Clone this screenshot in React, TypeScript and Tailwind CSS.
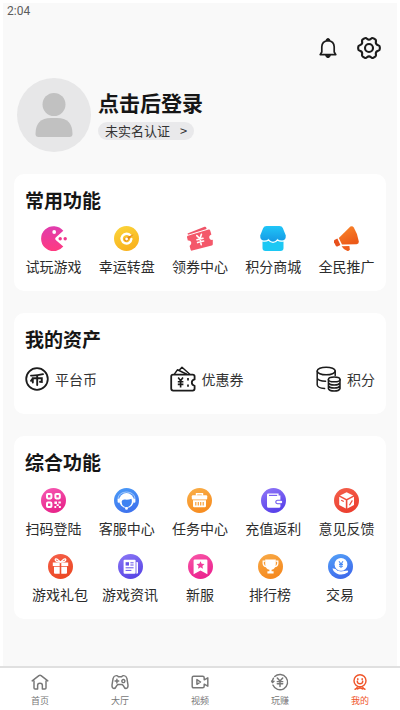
import { ReactNode, useState } from 'react';

type Item = {
  label: string;
  icon: ReactNode;
};

// round icon with a vertical gradient, used by the services card
function Disc({ id, from, to, children }: { id: string; from: string; to: string; children: ReactNode }) {
  return (
    <svg viewBox="0 0 25 25" className="h-[25px] w-[25px]" aria-hidden="true">
      <defs>
        <linearGradient id={id} x1="0" y1="0" x2="0.4" y2="1">
          <stop offset="0" stopColor={from} />
          <stop offset="1" stopColor={to} />
        </linearGradient>
      </defs>
      <circle cx="12.5" cy="12.5" r="12.5" fill={`url(#${id})`} />
      {children}
    </svg>
  );
}

const PacmanIcon = () => (
  <svg viewBox="0 0 26 25" className="h-[25px] w-[26px]" aria-hidden="true">
    <defs>
      <linearGradient id="pac" x1="0" y1="0" x2="0" y2="1">
        <stop offset="0" stopColor="#e03cae" />
        <stop offset="1" stopColor="#ff3a80" />
      </linearGradient>
    </defs>
    <path d="M22.3 4.8A12.5 12.5 0 1 0 22.3 20.6L15 14.2Q13.4 12.7 15 11.3Z" fill="url(#pac)" />
    <circle cx="13.2" cy="6" r="1.9" fill="#fff" />
    <circle cx="19.2" cy="12.8" r="1.7" fill="#f0388e" />
    <circle cx="24.2" cy="12.8" r="1.7" fill="#f0388e" />
  </svg>
);

const WheelIcon = () => (
  <Disc id="wheel" from="#fbd63c" to="#f9b31d">
    <path d="M16.4 9.6A4.9 4.9 0 1 0 17.4 13" fill="none" stroke="#fff" strokeWidth="2.4" strokeLinecap="round" />
    <path d="M19.8 8.2L14.2 13.8A2 2 0 1 1 11.8 11.6Z" fill="#e58a1c" />
    <circle cx="12.6" cy="13" r="1.4" fill="#fff" />
  </Disc>
);

const TicketIcon = () => (
  <svg viewBox="0 0 27 25" className="h-[25px] w-[27px]" aria-hidden="true">
    <path d="M1.5 7.6L18.5 0.8Q19.8 0.4 20.3 1.8L20.6 3L2 8.8Z" fill="#ef5468" />
    <path d="M1.8 9.8L22.6 3.6Q23.8 3.3 24.2 4.5L25.4 8.4Q22.6 9.6 23.4 12.2Q24.2 14.3 26.8 13.8L26.8 18Q26.9 19.2 25.8 19.6L6.2 24.6Q5 24.9 4.6 23.8L3.6 20Q5.8 18.8 5.2 16.3Q4.4 14 1.8 14.6L1 11.2Q0.9 10.1 1.8 9.8Z" fill="#f4586a" />
    <path d="M10.8 9.6L14 12.8L15.4 8.2M14 12.8L15.2 18.6M11 13.8L17 12.2M11.6 16.6L17.6 15" fill="none" stroke="#fff" strokeWidth="1.6" strokeLinecap="round" />
  </svg>
);

const ShopIcon = () => (
  <svg viewBox="0 0 26 25" className="h-[25px] w-[26px]" aria-hidden="true">
    <defs>
      <linearGradient id="shop" x1="0" y1="0" x2="0" y2="1">
        <stop offset="0" stopColor="#20c6f8" />
        <stop offset="1" stopColor="#1598e4" />
      </linearGradient>
    </defs>
    <path d="M2.5 13H23.5V22Q23.5 25 20.5 25H5.5Q2.5 25 2.5 22Z" fill="#1cc8f4" />
    <path d="M6.5 0H19.5Q22 0 22.8 2L25.8 9.4Q26 14.4 21.8 14.4Q19.3 14.4 17.5 12.8Q15.5 15.8 13 15.8Q10.5 15.8 8.5 12.8Q6.7 14.4 4.2 14.4Q0 14.4 0.2 9.4L3.2 2Q4 0 6.5 0Z" fill="url(#shop)" />
    <path d="M2 14.8Q6.5 15.8 8.5 13.8Q10.4 16.4 13 16.4Q15.6 16.4 17.5 13.8Q19.5 15.8 24 14.8" fill="none" stroke="#fff" strokeWidth="1.2" />
  </svg>
);

const HornIcon = () => (
  <svg viewBox="0 0 25 25" className="h-[25px] w-[25px]" aria-hidden="true">
    <defs>
      <linearGradient id="horn" x1="0" y1="0" x2="0.5" y2="1">
        <stop offset="0" stopColor="#fb8a2c" />
        <stop offset="1" stopColor="#ec5a18" />
      </linearGradient>
    </defs>
    <path d="M16.4 0.6Q18.4 -0.6 19.8 1.5Q23.6 7.6 24.8 15.4Q25 18 22.6 18.2L8 18.6L4.8 12Z" fill="url(#horn)" />
    <path d="M0.4 14L3.4 12.6L6.4 19L3.4 20.4Q2.2 20.8 1.6 19.6L0 16.2Q-0.4 14.6 0.4 14Z" fill="#e8501c" />
    <path d="M7.6 20.2L15.4 20L15.8 23.2Q15.4 25.6 13 24.8Q9.4 23.4 7.6 20.2Z" fill="#ee5d1c" />
  </svg>
);

const QrIcon = () => (
  <Disc id="qr" from="#f75ab4" to="#e8268b">
    <g fill="none" stroke="#fff" strokeWidth="2">
      <rect x="6" y="6" width="4.4" height="4.4" rx="0.8" />
      <rect x="14.4" y="6" width="4.4" height="4.4" rx="0.8" />
      <rect x="6" y="14.6" width="4.4" height="4.4" rx="0.8" />
    </g>
    <path d="M13.4 13.6H16V16H13.4ZM17.4 13.6H19.8V15.4H17.4ZM15.6 16.2H17.8V18H15.6ZM13.4 18H15.2V20H13.4ZM17.8 18H19.8V20H17.8Z" fill="#fff" />
  </Disc>
);

const ServiceIcon = () => (
  <Disc id="service" from="#4a9cf8" to="#3f74ee">
    <circle cx="12.5" cy="12.4" r="7.4" fill="#fff" />
    <path d="M7.6 13.8Q8 11.4 11 11.6Q14.5 12 17.5 10.8Q19 16 15 18.6Q12.5 20 10 18.6Q7.6 17 7.6 13.8Z" fill="#3f83f2" />
    <path d="M3.9 10.6Q5 4.2 12.5 4Q20 4.2 21.1 10.6" fill="none" stroke="#a9cdfb" strokeWidth="1" />
    <rect x="3.6" y="10.4" width="2.2" height="4.4" rx="1.1" fill="#fff" />
    <rect x="19.2" y="10.4" width="2.2" height="4.4" rx="1.1" fill="#fff" />
    <circle cx="12.5" cy="20.4" r="1.4" fill="#fff" />
  </Disc>
);

const TaskIcon = () => (
  <Disc id="task" from="#f9b04a" to="#f78e22">
    <path d="M9.5 7.5V5.8H15.5V7.5" fill="none" stroke="#fff" strokeWidth="1.4" />
    <rect x="4.8" y="7.2" width="15.4" height="4.2" rx="1" fill="#fff" />
    <path d="M6 12.2H19V18Q19 19.2 17.8 19.2H7.2Q6 19.2 6 18Z" fill="#fff" />
    <path d="M8.8 14V17.4M11.3 14V17.4M13.7 14V17.4M16.2 14V17.4" stroke="#f8a03a" strokeWidth="1.2" />
  </Disc>
);

const WalletIcon = () => (
  <Disc id="wallet" from="#9177f8" to="#5a43ea">
    <path d="M7.2 5.6H17.6V7.6H19.4V11.8H16.4Q14.2 12 14.2 14Q14.2 16 16.4 16.2H19.4V18.4Q19.4 19.8 18 19.8H7.6Q6 19.8 6 18.2V6.8Q6 5.6 7.2 5.6Z" fill="#fff" />
    <path d="M8 7.4H16.2" stroke="#7a62f2" strokeWidth="1.2" />
    <rect x="15.4" y="12.8" width="5.8" height="2.5" rx="1.2" fill="#fff" />
  </Disc>
);

const BoxIcon = () => (
  <Disc id="box" from="#f4604c" to="#ec4030">
    <path d="M12.6 4.2L19.2 7.6L12.6 11L6 7.6Z" fill="#fff" />
    <path d="M5.2 8.8L11.8 12.2V20.4L5.2 17Z" fill="#fff" />
    <path d="M20 8.8L13.4 12.2V20.4L20 17Z" fill="#fff" />
    <path d="M7.2 12.2L9.8 13.5" stroke="#ee4c3c" strokeWidth="1.2" />
    <path d="M15.4 17.2L18.4 12.4" stroke="#ee4c3c" strokeWidth="1.2" />
  </Disc>
);

const GiftIcon = () => (
  <Disc id="gift" from="#f6604a" to="#ec4a26">
    <path d="M12.5 8.2Q8 3.4 7.2 5.6Q7 7.8 12.5 8.2Q18 7.8 17.8 5.6Q17 3.4 12.5 8.2Z" fill="none" stroke="#fff" strokeWidth="1.3" />
    <path d="M4.8 8.4H11.7V12H4.8ZM13.3 8.4H20.2V12H13.3ZM6 12.8H11.7V19.8H7Q6 19.8 6 18.8ZM13.3 12.8H19V18.8Q19 19.8 18 19.8H13.3Z" fill="#fff" />
  </Disc>
);

const NewsIcon = () => (
  <Disc id="news" from="#8c78f6" to="#5b48e6">
    <rect x="5.6" y="5.8" width="12" height="14" rx="1" fill="#fff" />
    <path d="M18.4 8H19.2Q20 8 20 8.8V18.4Q20 19.8 18.4 19.8Z" fill="#fff" />
    <rect x="7.6" y="8.2" width="3.4" height="3.4" fill="#6753ea" />
    <path d="M12.4 8.8H15.6M12.4 11H15.6M7.6 13.8H15.6M7.6 16.4H13.4" stroke="#6753ea" strokeWidth="1" />
  </Disc>
);

const StarIcon = () => (
  <Disc id="star" from="#f957a8" to="#ec2590">
    <path d="M6.8 5.4H18.2Q19.4 5.4 19.4 6.6V20.2L12.5 16.4L5.6 20.2V6.6Q5.6 5.4 6.8 5.4Z" fill="#fff" />
    <path d="M12.5 7.2L13.7 9.8L16.5 10.1L14.4 12L15 14.7L12.5 13.3L10 14.7L10.6 12L8.5 10.1L11.3 9.8Z" fill="#f23c9a" />
  </Disc>
);

const TrophyIcon = () => (
  <Disc id="trophy" from="#f8ab48" to="#f58a20">
    <path d="M7.2 5.6H17.8V10Q17.6 15 13.6 15.8V17.2H15.6V19.6H9.4V17.2H11.4V15.8Q7.4 15 7.2 10Z" fill="#fff" />
    <path d="M7.2 7.2H5.2V9.6Q5.6 12.4 8.2 12.6M17.8 7.2H19.8V9.6Q19.4 12.4 16.8 12.6" fill="none" stroke="#fff" strokeWidth="1.3" />
  </Disc>
);

const TradeIcon = () => (
  <Disc id="trade" from="#54a2f8" to="#3f6cec">
    <circle cx="13" cy="10.4" r="6.4" fill="#fff" />
    <path d="M11 7.2L13 10L15 7.2M13 10V14M11 10.4H15M11 12.2H15" fill="none" stroke="#4c8cf4" strokeWidth="1.1" />
    <path d="M4.4 14.6Q7.4 14 9.4 16.8L13 17.6L19.6 16.4Q20.8 17.2 19.6 18.6Q16 21.2 11 20.4Q6 19.4 4.4 14.6Z" fill="#fff" />
  </Disc>
);

const CoinIcon = () => (
  <svg viewBox="0 0 24 24" className="h-6 w-6" fill="none" stroke="#1c1c1c" strokeWidth="1.8" aria-hidden="true">
    <circle cx="12" cy="12" r="10.8" />
    <path d="M6 8.6Q12 8.8 18 7.2M12.2 8.4V18M7.8 15.6V11.2H16.8V15L15 14.8M6 13.8L8 11.2" strokeWidth="1.9" strokeLinecap="round" />
  </svg>
);

const CouponIcon = () => (
  <svg viewBox="0 0 26 26" className="h-[26px] w-[26px]" fill="none" stroke="#1c1c1c" strokeWidth="1.8" strokeLinejoin="round" aria-hidden="true">
    <path d="M3 8.6H22.6Q24.6 8.6 24.6 10.4V13.4Q21.8 14 21.8 16.6Q21.8 19.2 24.6 19.8V22.6Q24.6 24.6 22.6 24.6H3.2Q1.2 24.6 1.2 22.6V10.4Q1.2 8.6 3 8.6Z" />
    <path d="M4.4 8.2L7.4 3.8L16.8 8.2M9.2 4.2L12 1.2L19.8 8.2" strokeWidth="1.5" />
    <path d="M8.2 11.6L10.6 14.8L13 11.6M10.6 14.8V21.4M7.8 15.8H13.4M7.8 18.4H13.4" strokeWidth="1.6" />
    <path d="M18 12V14.4M18 18.4V20.8" strokeWidth="1.7" />
  </svg>
);

const PointsIcon = () => (
  <svg viewBox="0 0 25 26" className="h-[26px] w-[25px]" fill="none" stroke="#1c1c1c" strokeWidth="1.5" strokeLinecap="round" aria-hidden="true">
    <ellipse cx="10.2" cy="5" rx="9" ry="3.8" />
    <path d="M1.2 5V19Q1.6 22 8.6 22.6M19.2 5V9.4M1.2 12.2Q2.4 15 9.6 15.2" />
    <ellipse cx="18.2" cy="13.4" rx="5.8" ry="2.4" />
    <path d="M12.4 13.4V22.6Q13.4 25 18.2 25Q23 25 24 22.6V13.4M12.4 16.6Q13.4 19 18.2 19Q23 19 24 16.6M12.4 19.6Q13.4 22 18.2 22Q23 22 24 19.6" />
  </svg>
);

const BellIcon = () => (
  <svg viewBox="0 0 22 22" className="h-[22px] w-[22px]" fill="none" stroke="#1c1c1c" strokeWidth="1.7" strokeLinejoin="round" aria-hidden="true">
    <path d="M3.2 17.6H18.8L17.2 15V9.8Q17 4.2 11 3.6Q5 4.2 4.8 9.8V15Z" />
    <path d="M9 3.4Q9.2 1.6 11 1.6Q12.8 1.6 13 3.4ZM8.6 18.4Q9.2 20.6 11 20.6Q12.8 20.6 13.4 18.4Z" fill="#1c1c1c" strokeWidth="1" />
  </svg>
);

const GearIcon = () => (
  <svg viewBox="0 0 24 24" className="h-6 w-6" fill="none" stroke="#1c1c1c" strokeWidth="2.1" strokeLinejoin="round" aria-hidden="true">
    <path d="M7.4 2.4Q9 1.4 10 2.8Q12 4.6 14 2.8Q15 1.4 16.6 2.4L18.2 3.4Q19.4 4.4 18.8 5.9Q18.6 8.6 21.2 9.2Q22.8 9.6 22.8 11V13Q22.8 14.4 21.2 14.8Q18.6 15.4 18.8 18.1Q19.4 19.6 18.2 20.6L16.6 21.6Q15 22.6 14 21.2Q12 19.4 10 21.2Q9 22.6 7.4 21.6L5.8 20.6Q4.6 19.6 5.2 18.1Q5.4 15.4 2.8 14.8Q1.2 14.4 1.2 13V11Q1.2 9.6 2.8 9.2Q5.4 8.6 5.2 5.9Q4.6 4.4 5.8 3.4Z" />
    <circle cx="12" cy="12" r="4" />
  </svg>
);

const commonItems: Item[] = [
  { label: '试玩游戏', icon: <PacmanIcon /> },
  { label: '幸运转盘', icon: <WheelIcon /> },
  { label: '领券中心', icon: <TicketIcon /> },
  { label: '积分商城', icon: <ShopIcon /> },
  { label: '全民推广', icon: <HornIcon /> },
];

const assetItems: Item[] = [
  { label: '平台币', icon: <CoinIcon /> },
  { label: '优惠券', icon: <CouponIcon /> },
  { label: '积分', icon: <PointsIcon /> },
];

const serviceItems: Item[] = [
  { label: '扫码登陆', icon: <QrIcon /> },
  { label: '客服中心', icon: <ServiceIcon /> },
  { label: '任务中心', icon: <TaskIcon /> },
  { label: '充值返利', icon: <WalletIcon /> },
  { label: '意见反馈', icon: <BoxIcon /> },
];

const moreItems: Item[] = [
  { label: '游戏礼包', icon: <GiftIcon /> },
  { label: '游戏资讯', icon: <NewsIcon /> },
  { label: '新服', icon: <StarIcon /> },
  { label: '排行榜', icon: <TrophyIcon /> },
  { label: '交易', icon: <TradeIcon /> },
];

// tab icons take the colour of their button
const tabs: Item[] = [
  {
    label: '首页',
    icon: <path d="M3.4 9V16.6Q3.4 17.8 4.6 17.8H7.4V13.4Q7.6 11.4 10 11.4Q12.4 11.4 12.6 13.4V17.8H15.4Q16.6 17.8 16.6 16.6V9M1.4 8.8L8.8 3Q10 2.2 11.2 3L18.6 8.8" />,
  },
  {
    label: '大厅',
    icon: <path d="M5.6 3Q7.2 2.8 8.2 4.2H11.8Q12.8 2.8 14.4 3Q16.8 3.2 17.6 6L18.8 13.4Q19 17 16.6 17.2Q15 17.2 13.6 14Q12.8 12.8 11.6 12.8H8.4Q7.2 12.8 6.4 14Q5 17.2 3.4 17.2Q1 17 1.2 13.4L2.4 6Q3.2 3.2 5.6 3ZM6.6 7V11M4.6 9H8.6M15.4 9A1.7 1.7 0 1 1 12 9A1.7 1.7 0 1 1 15.4 9" />,
  },
  {
    label: '视频',
    icon: <path d="M3 3.6H13Q14.6 3.6 14.6 5.2V7.6L18.6 5.4V14.6L14.6 12.4V14.8Q14.6 16.4 13 16.4H3Q1.4 16.4 1.4 14.8V5.2Q1.4 3.6 3 3.6ZM6.6 7.4V12.6L10.6 10Z" />,
  },
  {
    label: '玩赚',
    icon: <path d="M4.2 4A8.4 8.4 0 1 1 2.2 13.4M1.6 10.4A8.4 8.4 0 0 1 2.8 5.8M0.8 9L1.8 10.6L3.4 9.2M7 5.6L10 9L13 5.6M10 9V15M7 9.6H13M7 12H13" />,
  },
  {
    label: '我的',
    icon: <path d="M16.6 8.6A6.6 6.6 0 1 1 3.4 8.6A6.6 6.6 0 1 1 16.6 8.6M7 9.2Q7.2 12 10 12Q12.8 12 13 9.2M7.6 6.4V7.4M12.4 6.4V7.4M7.4 14.6Q6.8 17.4 4.6 18M12.6 14.6Q13.2 17.4 15.4 18M7.2 17.6Q10 15.6 12.8 17.6" />,
  },
];

function Card({ title, children }: { title: string; children: ReactNode }) {
  return (
    <section className="mx-[11px] mt-[22px] rounded-[10px] bg-white pt-3">
      <h2 className="px-[11px] text-[19px] leading-7 font-bold text-[#161616]">{title}</h2>
      {children}
    </section>
  );
}

function Entry({ item }: { item: Item }) {
  return (
    <button type="button" className="flex flex-col items-center gap-[5px]">
      {item.icon}
      <span className="text-sm whitespace-nowrap text-[#2c2c2c]">{item.label}</span>
    </button>
  );
}

export default function App() {
  const [active, setActive] = useState(4);

  return (
    <div className="flex min-h-screen flex-col bg-white font-['Noto_Sans_CJK_SC',sans-serif]">
      <main className="mx-[3px] mt-[3px] flex-1 bg-[#f9f9f9] pb-4">
        <div className="px-1 font-['Roboto',sans-serif] text-xs text-[#5c5c5c]">2:04</div>
        <div className="mt-[17px] flex items-center justify-end gap-[18px] pr-4">
          <button type="button" aria-label="消息"><BellIcon /></button>
          <button type="button" aria-label="设置"><GearIcon /></button>
        </div>

        <header className="mt-[18px] flex items-center gap-[7px] pl-[14px]">
          <svg viewBox="0 0 74 74" className="h-[74px] w-[74px] shrink-0" aria-hidden="true">
            <circle cx="37" cy="37" r="37" fill="#e7e7e8" />
            <circle cx="37" cy="26.5" r="11.5" fill="#c1c1c1" />
            <path d="M18.5 56Q18.5 40 34 40H40Q55.5 40 55.5 56Q55.5 59 52.5 59H21.5Q18.5 59 18.5 56Z" fill="#c1c1c1" />
          </svg>
          <div className="flex flex-col items-start gap-[6px] pb-[3px]">
            <a href="#login" className="text-[21px] leading-7 font-bold text-[#161616]">点击后登录</a>
            <button type="button" className="flex h-[18px] items-center gap-[10px] rounded-full bg-[#e9e9eb] px-[7px] text-[13px] leading-4 text-[#333]">
              <span>未实名认证</span>
              <span>&gt;</span>
            </button>
          </div>
        </header>

        <Card title="常用功能">
          <div className="grid grid-cols-5 px-[3px] pt-3 pb-[15px]">
            {commonItems.map((item) => <Entry key={item.label} item={item} />)}
          </div>
        </Card>

        <Card title="我的资产">
          <div className="flex items-center justify-between px-[11px] pt-[13px] pb-[22px]">
            {assetItems.map((item) => (
              <button key={item.label} type="button" className="flex items-center gap-[6px]">
                {item.icon}
                <span className="text-sm text-[#333]">{item.label}</span>
              </button>
            ))}
          </div>
        </Card>

        <Card title="综合功能">
          <div className="grid grid-cols-5 px-[3px] pt-3">
            {serviceItems.map((item) => <Entry key={item.label} item={item} />)}
          </div>
          <div className="grid grid-cols-5 px-[11px] pt-4 pb-[15px]">
            {moreItems.map((item) => <Entry key={item.label} item={item} />)}
          </div>
        </Card>
      </main>

      <nav className="grid grid-cols-5 border-t-2 border-[#e0e0e0] bg-white pt-1 pb-[3px]">
        {tabs.map((tab, i) => (
          <button
            key={tab.label}
            type="button"
            onClick={() => setActive(i)}
            className={i === active ? 'flex flex-col items-center gap-[3px] text-[#f0562b]' : 'flex flex-col items-center gap-[3px] text-[#777]'}
          >
            <svg viewBox="0 0 22 22" className="h-5 w-5" fill="none" stroke="currentColor" strokeWidth="1.6" strokeLinecap="round" strokeLinejoin="round" aria-hidden="true">
              <g transform="translate(1 1)">{tab.icon}</g>
            </svg>
            <span className="text-[9px] leading-3">{tab.label}</span>
          </button>
        ))}
      </nav>
    </div>
  );
}
